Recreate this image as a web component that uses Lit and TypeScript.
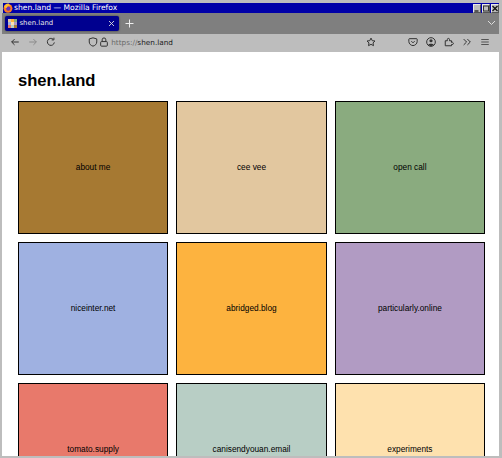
import { LitElement, html, css, svg } from "lit";
import { customElement } from "lit/decorators.js";

const CARDS: [string, string][] = [
  ["about me", "#a67932"],
  ["cee vee", "#e2c79f"],
  ["open call", "#8aab7f"],
  ["niceinter.net", "#9fb1e1"],
  ["abridged.blog", "#fdb33f"],
  ["particularly.online", "#b19bc3"],
  ["tomato.supply", "#e8796b"],
  ["canisendyouan.email", "#b8cec5"],
  ["experiments", "#fee1ae"],
];

const ico = (c: unknown, stroke = "#333") =>
  html`<svg class="ico" width="10" height="10" viewBox="0 0 12 12" fill="none" stroke=${stroke} stroke-width="1.200">${c}</svg>`;

@customElement("app-root")
export class AppRoot extends LitElement {
  static styles = css`
    :host { display: block; width: 502px; height: 458px; overflow: hidden; font-family: "DejaVu Sans", sans-serif; }
    .win { box-sizing: border-box; width: 502px; height: 458px; background: #bdbdbd; padding: 3px 3px 2px 2px; display: flex; flex-direction: column; overflow: hidden; }
    .title { flex: none; height: 10px; margin-left: 1px; background: #0000a8; display: flex; align-items: center; color: #fff; font-size: 7.600px; line-height: 10px; }
    .title .fx { flex: none; margin: 0 1px 0 0; }
    .title .t { flex: 1; white-space: nowrap; }
    .wb { flex: none; width: 8.500px; height: 9px; box-sizing: border-box; background: #bdbdbd; border: 1px solid; border-color: #e8e8e8 #555 #555 #e8e8e8; display: flex; align-items: center; justify-content: center; margin-left: .5px; }
    .wb svg { flex: none; }
    .tabs { flex: none; height: 21px; background: #7f7f7f; display: flex; align-items: center; box-sizing: border-box; padding: 0 3.500px 1px 3px; }
    .tab { flex: none; width: 114px; height: 15px; box-sizing: border-box; background: #00008f; border-radius: 2px; display: flex; align-items: center; color: #e8e8e8; font-size: 6.900px; padding: 0 4.500px 0 3px; gap: 2.500px; box-shadow: 0 0 2px #333; }
    .fav { flex: none; width: 9px; height: 9px; display: grid; grid-template-columns: repeat(3, 1fr); }
    .fav i { display: block; }
    .tab .n { flex: 1; }
    .plus { margin-left: 6px; flex: 1; }
    .bar { flex: none; height: 18px; box-sizing: border-box; padding: 0 9px 2px 7.500px; display: flex; align-items: center; }
    .grp { flex: none; display: flex; align-items: center; gap: 8px; }
    .site { margin-left: 32px; gap: 1.700px; }
    .ico { flex: none; display: block; }
    .url { flex: 1; font-size: 7.300px; color: #6b6b6b; margin-left: 2px; white-space: nowrap; }
    .url b { font-weight: 400; color: #222; }
    .right { margin-left: 32px; }
    .page { flex: 1; min-height: 0; background: #fff; overflow: hidden; padding: 0 14px 0 16px; font-family: "Liberation Sans", Arial, sans-serif; color: #000; }
    h1 { margin: 19px 0 10px; font-size: 16.600px; line-height: 20px; font-weight: 700; }
    .grid { display: grid; grid-template-columns: repeat(3, 1fr); gap: 8.300px; }
    .card { box-sizing: border-box; height: 132.700px; border: 1px solid #000; display: flex; align-items: center; justify-content: center; font-size: 8.300px; }
  `;

  render() {
    const favC = ["#e2c79f", "#fdb33f", "#8aab7f", "#9fb1e1", "#fee1ae", "#b19bc3", "#e8796b", "#b8cec5", "#a67932"];
    return html`<div class="win">
      <div class="title">
        <svg class="fx" width="10" height="10" viewBox="0 0 10 10">
          <circle cx="5" cy="5.300" r="4.400" fill="#ff7a1f"/>
          <circle cx="5.300" cy="5.600" r="2.200" fill="#6a33b8"/>
          <path d="M1 4 C1.500 1.500 4 0 6 .6 C5 1.500 6.500 2 8 2.400 C6 2.400 4 3 3.600 5 C2.600 5 1.600 4.800 1 4Z" fill="#ffbe2e"/>
        </svg>
        <span class="t">shen.land — Mozilla Firefox</span>
        <span class="wb"><svg width="6" height="7" viewBox="0 0 6 7"><path d="M.5 6H4.500" stroke="#111" stroke-width="1.200"/></svg></span>
        <span class="wb"><svg width="6" height="7" viewBox="0 0 6 7"><rect x=".5" y="1" width="5" height="5" fill="none" stroke="#333"/></svg></span>
        <span class="wb"><svg width="6" height="7" viewBox="0 0 6 7"><path d="M.5 1L5.500 6M5.500 1L.5 6" stroke="#111" stroke-width="1.300"/></svg></span>
      </div>
      <div class="tabs">
        <div class="tab">
          <span class="fav">${favC.map((c) => html`<i style="background:${c}"></i>`)}</span>
          <span class="n">shen.land</span>
          <svg width="7" height="7" viewBox="0 0 7 7"><path d="M1 1L6 6M6 1L1 6" stroke="#ddd" stroke-width=".9"/></svg>
        </div>
        <svg class="plus" width="9" height="9" viewBox="0 0 9 9" preserveAspectRatio="xMinYMid"><path d="M4.500 .5V8.500M.5 4.500H8.500" stroke="#eee" stroke-width="1"/></svg>
        <svg width="9" height="6" viewBox="0 0 9 6"><path d="M1 1L4.500 4.500L8 1" fill="none" stroke="#ddd" stroke-width="1"/></svg>
      </div>
      <div class="bar">
        <div class="grp">
          ${ico(svg`<path d="M10.500 6H2M5.500 2.500L2 6L5.500 9.500"/>`)}
          ${ico(svg`<path d="M1.500 6H10M6.500 2.500L10 6L6.500 9.500"/>`, "#8a8a8a")}
          ${ico(svg`<path d="M10 6.500A4.200 4.200 0 1 1 8.500 2.600M9.500 .8V3.500H6.800"/>`)}
        </div>
        <div class="grp site">
          ${ico(svg`<path d="M6 1L10.500 2.300V6C10.500 8.500 8.500 10.300 6 11C3.500 10.300 1.500 8.500 1.500 6V2.300Z"/>`)}
          ${ico(svg`<rect x="2" y="5.500" width="8" height="5.500" rx="1"/><path d="M3.800 5.500V3.300A2.200 2.200 0 0 1 8.200 3.300V5.500"/>`)}
        </div>
        <span class="url">https://<b>shen.land</b></span>
        ${ico(svg`<path d="M6 1.300L7.500 4.400L10.800 4.800L8.400 7.100L9 10.400L6 8.800L3 10.400L3.600 7.100L1.200 4.800L4.500 4.400Z"/>`)}
        <div class="grp right">
          ${ico(svg`<path d="M1.500 2H10.500A.8 .8 0 0 1 11 3V5.500C11 8 8.500 10.300 6 10.300C3.500 10.300 1 8 1 5.500V3A.8 .8 0 0 1 1.500 2Z"/><path d="M4 5L6 7L8 5"/>`)}
          <svg class="ico" width="10" height="10" viewBox="0 0 12 12"><circle cx="6" cy="6" r="5.200" fill="none" stroke="#333" stroke-width="1.200"/><circle cx="6" cy="4.500" r="1.900" fill="#333"/><path d="M2.800 9.500C3.500 7.800 8.500 7.800 9.200 9.500L6 11Z" fill="#333"/></svg>
          ${ico(svg`<path d="M1.500 10.500V4.500H4V3A1.300 1.300 0 0 1 6.600 3V4.500H9V6.500A1.300 1.300 0 0 1 10.500 9H9V10.500Z"/>`)}
          ${ico(svg`<path d="M2 2.500L5.500 6L2 9.500M6.500 2.500L10 6L6.500 9.500"/>`)}
          ${ico(svg`<path d="M1.500 3H10.500M1.500 6H10.500M1.500 9H10.500" stroke="#555"/>`)}
        </div>
      </div>
      <div class="page">
        <h1>shen.land</h1>
        <div class="grid">
          ${CARDS.map(([t, c]) => html`<div class="card" style="background:${c}">${t}</div>`)}
        </div>
      </div>
    </div>`;
  }
}
